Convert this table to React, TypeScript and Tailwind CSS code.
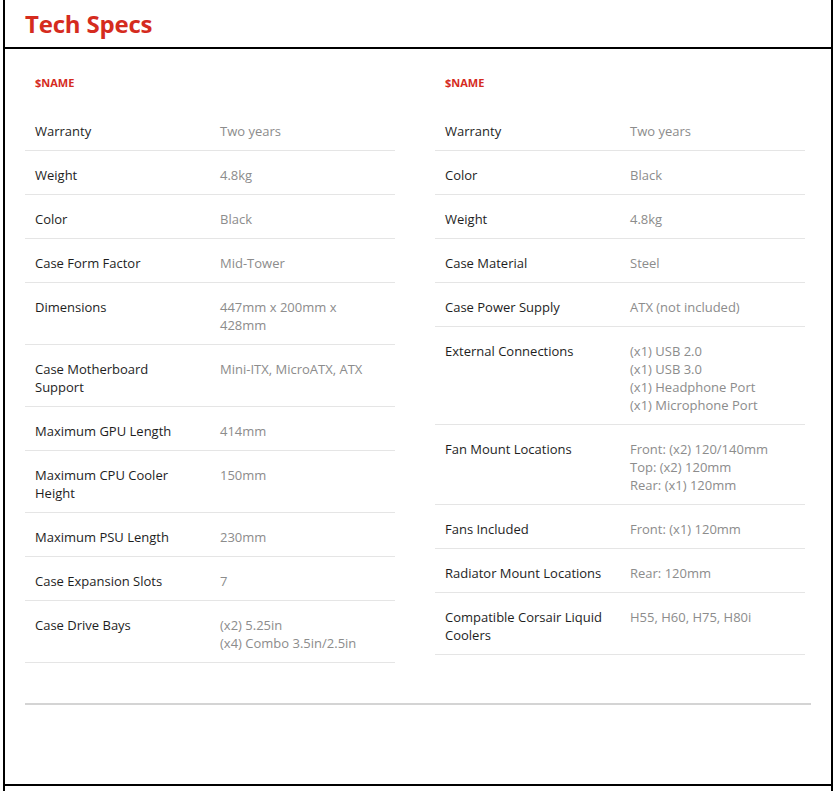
type Spec = { label: string; value: string[] };

const leftSpecs: Spec[] = [
  { label: "Warranty", value: ["Two years"] },
  { label: "Weight", value: ["4.8kg"] },
  { label: "Color", value: ["Black"] },
  { label: "Case Form Factor", value: ["Mid-Tower"] },
  { label: "Dimensions", value: ["447mm x 200mm x 428mm"] },
  { label: "Case Motherboard Support", value: ["Mini-ITX, MicroATX, ATX"] },
  { label: "Maximum GPU Length", value: ["414mm"] },
  { label: "Maximum CPU Cooler Height", value: ["150mm"] },
  { label: "Maximum PSU Length", value: ["230mm"] },
  { label: "Case Expansion Slots", value: ["7"] },
  { label: "Case Drive Bays", value: ["(x2) 5.25in", "(x4) Combo 3.5in/2.5in"] },
];

const rightSpecs: Spec[] = [
  { label: "Warranty", value: ["Two years"] },
  { label: "Color", value: ["Black"] },
  { label: "Weight", value: ["4.8kg"] },
  { label: "Case Material", value: ["Steel"] },
  { label: "Case Power Supply", value: ["ATX (not included)"] },
  {
    label: "External Connections",
    value: ["(x1) USB 2.0", "(x1) USB 3.0", "(x1) Headphone Port", "(x1) Microphone Port"],
  },
  {
    label: "Fan Mount Locations",
    value: ["Front: (x2) 120/140mm", "Top: (x2) 120mm", "Rear: (x1) 120mm"],
  },
  { label: "Fans Included", value: ["Front: (x1) 120mm"] },
  { label: "Radiator Mount Locations", value: ["Rear: 120mm"] },
  { label: "Compatible Corsair Liquid Coolers", value: ["H55, H60, H75, H80i"] },
];

function SpecTable({ name, specs }: { name: string; specs: Spec[] }) {
  return (
    <div className="w-[370px]">
      <p className="mb-[15px] pl-[10px] text-[11px] font-bold leading-[18px] text-[#d52b1e]">
        {name}
      </p>
      {specs.map((spec) => (
        <div
          key={spec.label}
          className="flex border-b border-[#e5e5e5] pb-[10px] pl-[10px] pr-[10px] pt-[15px] text-[13px] leading-[18px]"
        >
          <div className="w-[185px] shrink-0 pr-[25px] text-[#1e1e1e]">{spec.label}</div>
          <div className="w-[155px] text-[#8c8c8c]">
            {spec.value.map((line) => (
              <div key={line}>{line}</div>
            ))}
          </div>
        </div>
      ))}
    </div>
  );
}

export default function App() {
  return (
    <div className="h-[791px] w-[836px] overflow-hidden bg-white font-['Open_Sans',sans-serif]">
      <div className="ml-[3px] flex h-[791px] w-[830px] flex-col border-x-2 border-black">
        <div className="flex h-[49px] shrink-0 items-center border-b-2 border-black pl-[20px]">
          <h1 className="text-[24px] font-bold leading-[32px] tracking-[-0.2px] text-[#d52b1e]">
            Tech Specs
          </h1>
        </div>

        <div className="px-[20px] pt-[25px]">
          <div className="flex items-start gap-[40px]">
            <SpecTable name="$NAME" specs={leftSpecs} />
            <SpecTable name="$NAME" specs={rightSpecs} />
          </div>
          <div className="mt-[40px] h-[2px] w-[786px] bg-[#d4d4d4]" />
        </div>

        <div className="mt-auto mb-[5px] border-t-2 border-black" />
      </div>
    </div>
  );
}
